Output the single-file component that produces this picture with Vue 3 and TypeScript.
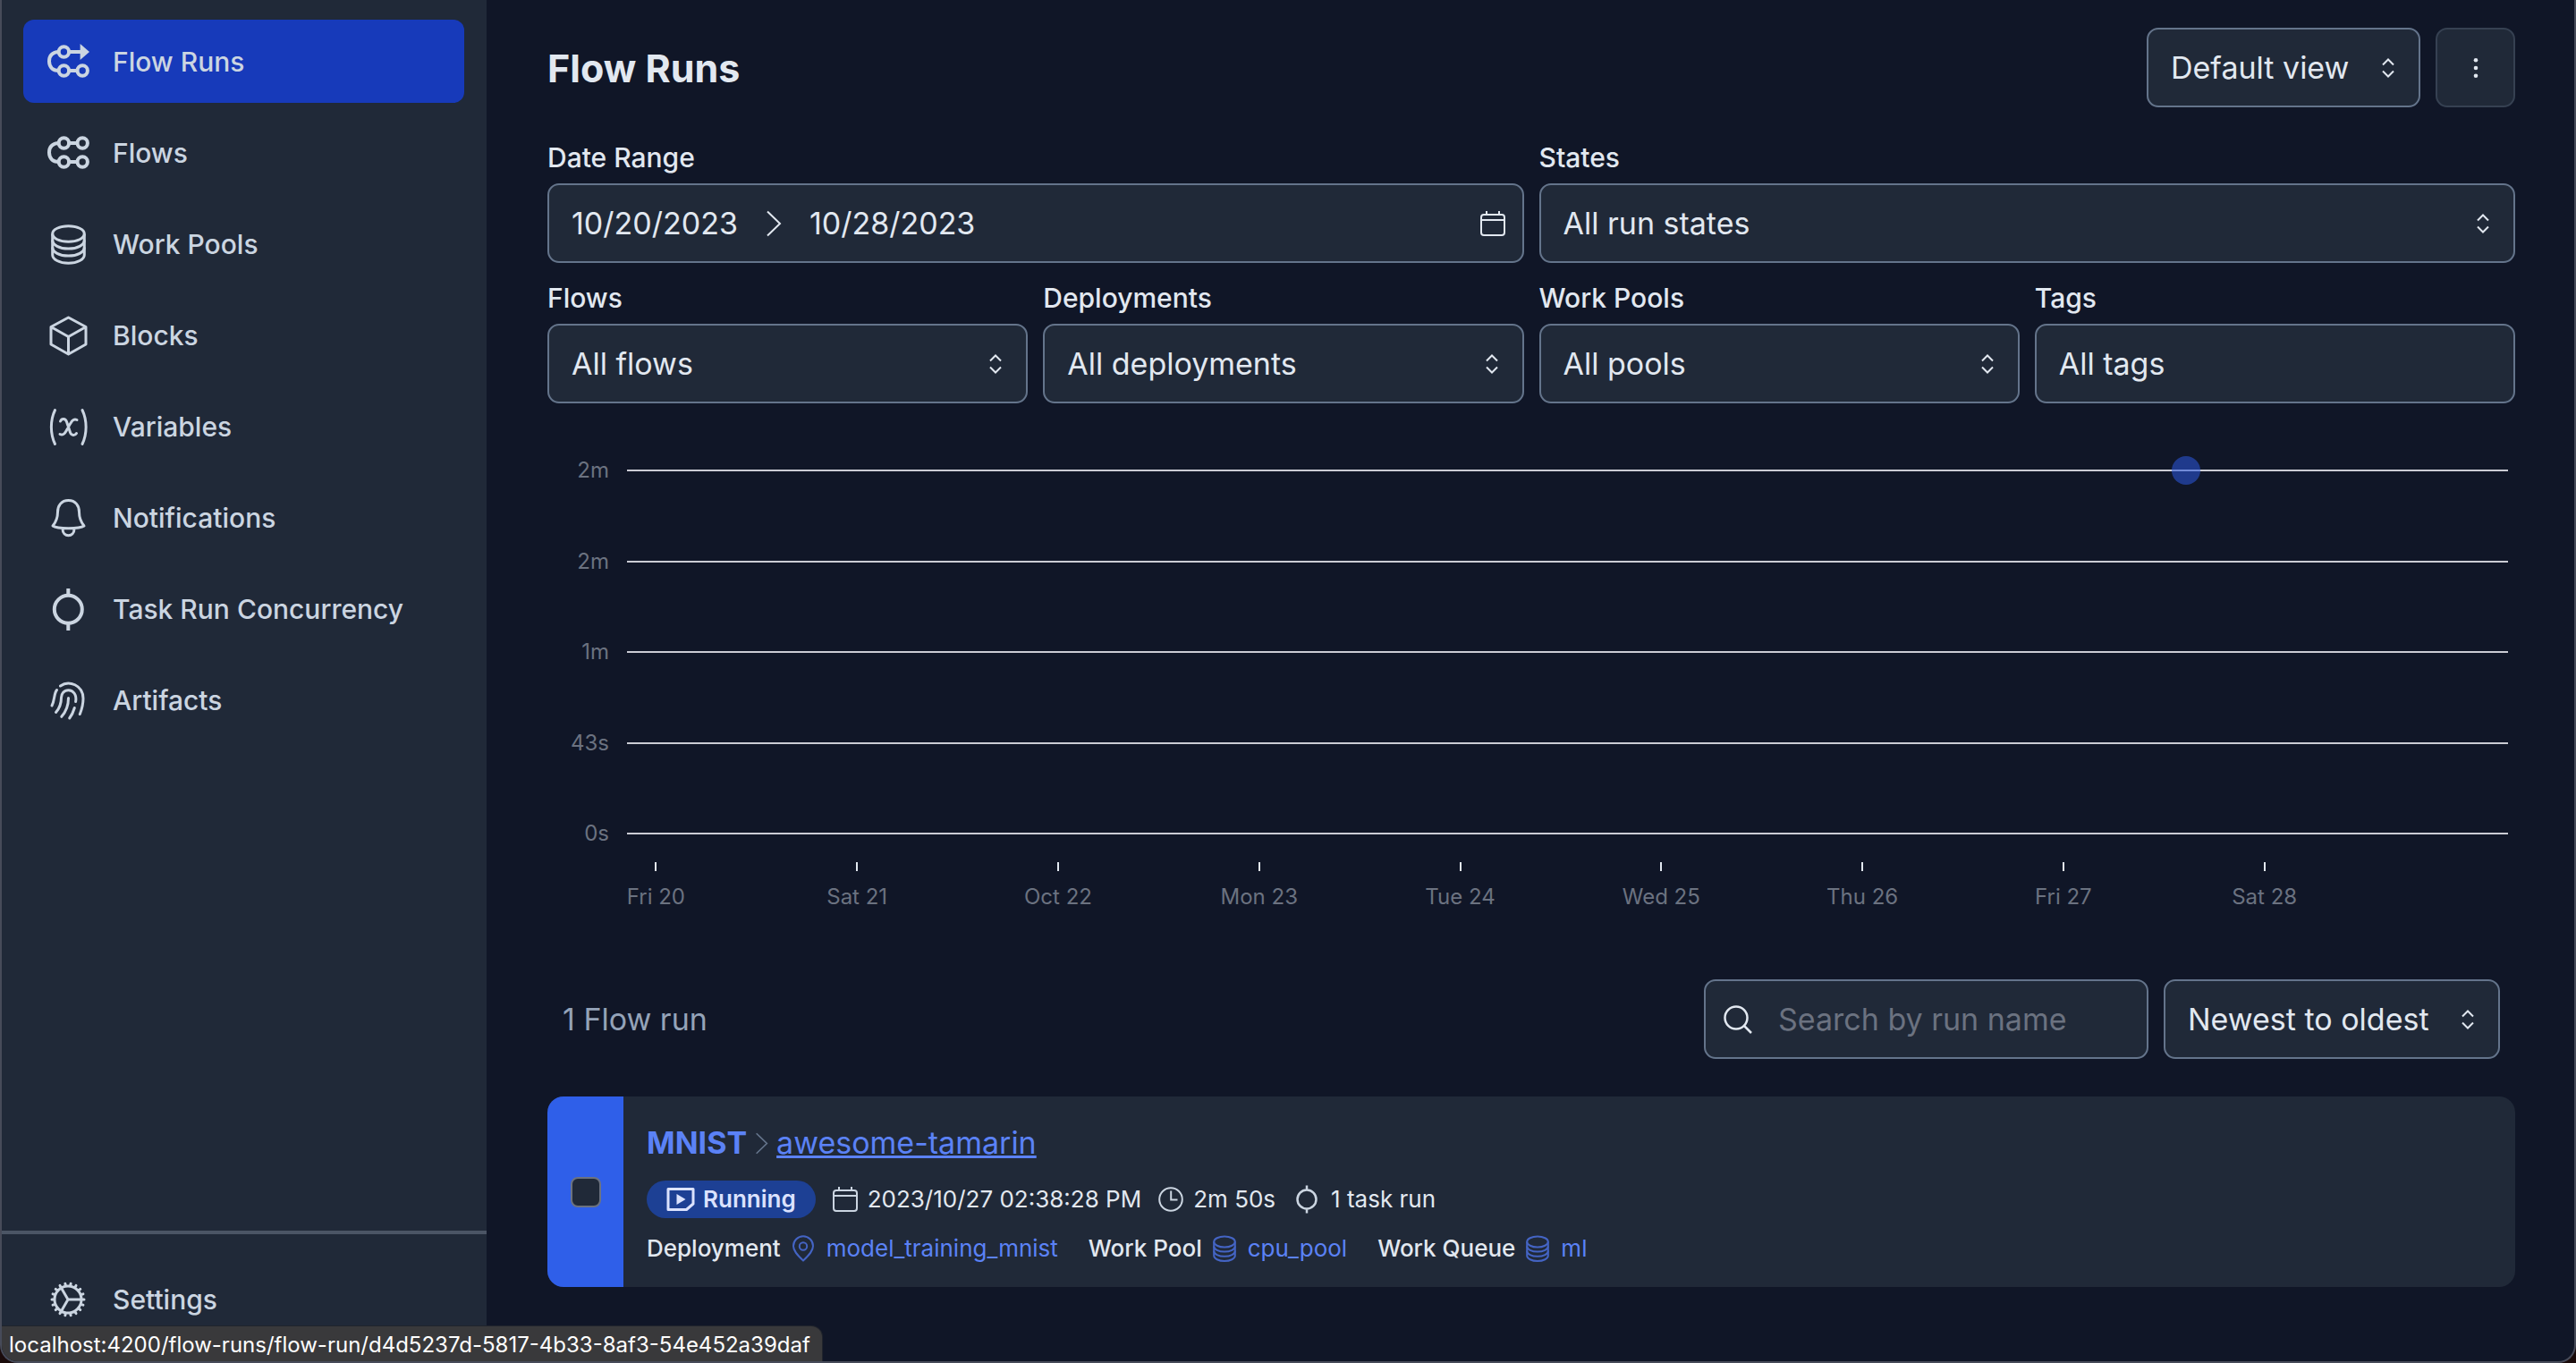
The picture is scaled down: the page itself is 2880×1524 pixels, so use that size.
<script setup lang="ts">
import { ref } from 'vue'

interface NavEntry {
  label: string
  icon: string
  active?: boolean
}

interface FilterEntry {
  id: string
  label: string
  value: string
}

const navigation: NavEntry[] = [
  { label: 'Flow Runs', icon: 'flow-runs', active: true },
  { label: 'Flows', icon: 'flows' },
  { label: 'Work Pools', icon: 'database' },
  { label: 'Blocks', icon: 'cube' },
  { label: 'Variables', icon: 'variable' },
  { label: 'Notifications', icon: 'bell' },
  { label: 'Task Run Concurrency', icon: 'task' },
  { label: 'Artifacts', icon: 'fingerprint' },
]

const filters: FilterEntry[] = [
  { id: 'flows-filter', label: 'Flows', value: 'All flows' },
  { id: 'deployments-filter', label: 'Deployments', value: 'All deployments' },
  { id: 'pools-filter', label: 'Work Pools', value: 'All pools' },
]

const durations: string[] = ['2m', '2m', '1m', '43s', '0s']
const days: string[] = ['Fri 20', 'Sat 21', 'Oct 22', 'Mon 23', 'Tue 24', 'Wed 25', 'Thu 26', 'Fri 27', 'Sat 28']

// Share of the plotted time span at which the run started
const runPosition = 82.88

const tags = ref('All tags')
const search = ref('')
const selected = ref(false)
</script>

<template>
  <svg class="sprite" aria-hidden="true">
    <symbol id="flow-runs" viewBox="0 0 48 48">
      <g fill="none" stroke="currentColor" stroke-width="4">
        <path d="M14 13C6 13 3 18 3 23.500S6 34 14 34M25 13H38M25 34H35" />
        <circle cx="19.400" cy="13" r="5.700" />
        <circle cx="19.400" cy="34" r="5.700" />
        <circle cx="40.200" cy="34" r="5.700" />
      </g>
      <path d="M37.600 4L48 13L37.600 22Z" fill="currentColor" />
    </symbol>
    <symbol id="flows" viewBox="0 0 48 48">
      <g fill="none" stroke="currentColor" stroke-width="4">
        <path d="M14 13C6 13 3 18 3 23.500S6 34 14 34M25 13H35M25 34H35" />
        <circle cx="19.400" cy="13" r="5.700" />
        <circle cx="40.200" cy="13" r="5.700" />
        <circle cx="19.400" cy="34" r="5.700" />
        <circle cx="40.200" cy="34" r="5.700" />
      </g>
    </symbol>
    <symbol id="database" viewBox="0 0 48 48">
      <g fill="none" stroke="currentColor" stroke-width="3">
        <ellipse cx="24.500" cy="12.500" rx="17.800" ry="8.800" />
        <path d="M6.700 12.500V36C6.700 41 14.500 45.300 24.500 45.300S42.300 41 42.300 36V12.500" />
        <path d="M6.700 19.500C6.700 25 14.500 29 24.500 29S42.300 25 42.300 19.500" />
        <path d="M6.700 27.500C6.700 33 14.500 37 24.500 37S42.300 33 42.300 27.500" />
      </g>
    </symbol>
    <symbol id="cube" viewBox="0 0 48 48">
      <path d="M24.500 4L44 14.500V34L24.500 45L5 34V14.500ZM5 14.500L24.500 25.500L44 14.500M24.500 25.500V45" fill="none" stroke="currentColor" stroke-width="3" stroke-linejoin="round" />
    </symbol>
    <symbol id="variable" viewBox="0 0 48 48">
      <g fill="none" stroke="currentColor" stroke-width="3" stroke-linecap="round">
        <path d="M9.500 5.500C4 17 4 32 9.500 43.500M40 5.500C45.500 17 45.500 32 40 43.500" />
        <path d="M15.500 18C17 14.500 21 14.500 22.500 18.500L26.500 30.500C28 34.500 32 34 33.500 31.500M34 16.500C30 14.500 28 18 24.500 24.500C21 31 19 34.500 15 32.500" />
      </g>
    </symbol>
    <symbol id="bell" viewBox="0 0 48 48">
      <path d="M24.500 4.500C16.500 4.500 12.500 10.500 12.500 17.500C12.500 26 9.500 30 7 33C12 36.500 37 36.500 42 33C39.500 30 36.500 26 36.500 17.500C36.500 10.500 32.500 4.500 24.500 4.500ZM18 36.500C18 46 31 46 31 36.500" fill="none" stroke="currentColor" stroke-width="3" stroke-linejoin="round" />
    </symbol>
    <symbol id="task" viewBox="0 0 48 48">
      <g fill="none" stroke="currentColor" stroke-width="4">
        <circle cx="24.300" cy="24.300" r="15.500" />
        <path d="M24.300 1V9M24.300 40V48" />
      </g>
    </symbol>
    <symbol id="fingerprint" viewBox="0 0 48 48">
      <g fill="none" stroke="currentColor" stroke-width="3" stroke-linecap="round">
        <path d="M15.500 8C25 1 41 7 41 22C41 28 39.500 34 37.300 39.500" />
        <path d="M11.500 12.500C8 17 9.500 23 6 30" />
        <path d="M32.600 25.500C34 18 30 12.700 24.500 12.700C19.500 12.700 16.500 16.500 16.500 21C16.500 27 14.500 33 10.500 37.500" />
        <path d="M24.500 21.500C24.500 30 21.500 37 16.800 42.300" />
        <path d="M31.300 32.500C30 37 28 41 25.700 44" />
      </g>
    </symbol>
    <symbol id="cog" viewBox="0 0 24 24">
      <path fill="none" stroke="currentColor" stroke-width="1.500" stroke-linecap="round" stroke-linejoin="round" d="M4.500 12a7.500 7.500 0 0 0 15 0m-15 0a7.500 7.500 0 1 1 15 0m-15 0H3m16.500 0H21m-1.500 0H12m-8.457 3.077l1.410-.513m14.095-5.130l1.410-.513M5.106 17.785l1.150-.964m11.490-9.642l1.149-.964M7.501 19.795l.750-1.300m7.500-12.990l.750-1.300m-6.063 16.658l.260-1.477m2.605-14.772l.260-1.477m0 17.726l-.260-1.477M10.698 4.614l-.260-1.477M16.500 19.794l-.750-1.299M7.500 4.205L12 12m6.894 5.785l-1.149-.964M6.256 7.178l-1.150-.964m15.352 8.864l-1.410-.513M4.954 9.435l-1.410-.514M12.002 12l-3.750 6.495" />
    </symbol>
    <symbol id="selector" viewBox="0 0 14 22">
      <path d="M1 7.500L7 1.500L13 7.500M1 14.500L7 20.500L13 14.500" fill="none" stroke="currentColor" stroke-width="2" />
    </symbol>
    <symbol id="calendar" viewBox="0 0 28 28">
      <path d="M1 7A3 3 0 0 1 4 4H24A3 3 0 0 1 27 7V24A3 3 0 0 1 24 27H4A3 3 0 0 1 1 24ZM1 10H27M7 0V4M21 0V4" fill="none" stroke="currentColor" stroke-width="2" />
    </symbol>
    <symbol id="clock" viewBox="0 0 28 28">
      <path d="M14 1.200A12.800 12.800 0 1 0 14 26.800A12.800 12.800 0 1 0 14 1.200M14.200 4.500V14.500H21.500" fill="none" stroke="currentColor" stroke-width="2" />
    </symbol>
    <symbol id="task-small" viewBox="0 0 32 32">
      <path d="M16 5.500A10.500 10.500 0 1 0 16 26.500A10.500 10.500 0 1 0 16 5.500M16 .5V5.500M16 26.500V31.500" fill="none" stroke="currentColor" stroke-width="2.500" />
    </symbol>
    <symbol id="pin" viewBox="0 0 30 30">
      <g fill="none" stroke="currentColor" stroke-width="2">
        <path d="M15 28.500C8 22 4 17.500 4 12.300A11 11 0 0 1 26 12.300C26 17.500 22 22 15 28.500Z" />
        <circle cx="15" cy="12.500" r="4.200" />
      </g>
    </symbol>
    <symbol id="database-small" viewBox="0 0 30 30">
      <g fill="none" stroke="currentColor" stroke-width="2">
        <ellipse cx="15" cy="7.500" rx="11.800" ry="6" />
        <path d="M3.200 7.500V23C3.200 26.300 8.500 29 15 29S26.800 26.300 26.800 23V7.500" />
        <path d="M3.200 12.500C3.200 16 8.500 18.600 15 18.600S26.800 16 26.800 12.500" />
        <path d="M3.200 17.700C3.200 21.200 8.500 23.800 15 23.800S26.800 21.200 26.800 17.700" />
      </g>
    </symbol>
    <symbol id="running" viewBox="0 0 32 28">
      <path d="M2 2.500H30V19L22.500 25.500H2Z" fill="none" stroke="currentColor" stroke-width="3" stroke-linejoin="round" />
      <path d="M11.500 8L21.500 14L11.500 20Z" fill="currentColor" />
    </symbol>
    <symbol id="search" viewBox="0 0 32 32">
      <path d="M14 1.500A12.500 12.500 0 1 0 14 26.500A12.500 12.500 0 1 0 14 1.500M23 23L31 31" fill="none" stroke="currentColor" stroke-width="2.500" />
    </symbol>
    <symbol id="chevron" viewBox="0 0 18 30">
      <path d="M2 1.500L16 15L2 28.500" fill="none" stroke="currentColor" stroke-width="2" />
    </symbol>
    <symbol id="kebab" viewBox="0 0 6 24">
      <g fill="currentColor">
        <circle cx="3" cy="3.300" r="2.300" />
        <circle cx="3" cy="12" r="2.300" />
        <circle cx="3" cy="20.700" r="2.300" />
      </g>
    </symbol>
  </svg>

  <div class="window">
    <aside class="sidebar">
      <nav class="nav" aria-label="Main">
        <a v-for="item in navigation" :key="item.label" href="#" class="nav-item" :class="{ 'nav-item--active': item.active }">
          <svg class="nav-icon"><use :href="`#${item.icon}`" /></svg>
          <span>{{ item.label }}</span>
        </a>
      </nav>
      <div class="sidebar-footer">
        <a href="#" class="nav-item">
          <svg class="nav-icon"><use href="#cog" /></svg>
          <span>Settings</span>
        </a>
      </div>
    </aside>

    <main class="main">
      <header class="header">
        <h1 class="title">Flow Runs</h1>
        <div class="actions">
          <div class="select-box">
            <select class="control select--fit" aria-label="Saved view">
              <option>Default view</option>
            </select>
            <svg class="selector"><use href="#selector" /></svg>
          </div>
          <button class="menu-button" type="button" aria-label="More actions">
            <svg class="kebab"><use href="#kebab" /></svg>
          </button>
        </div>
      </header>

      <section class="filters">
        <div class="field field--wide">
          <label for="date-range">Date Range</label>
          <button id="date-range" class="control date-range" type="button">
            <span>10/20/2023</span>
            <svg class="date-arrow"><use href="#chevron" /></svg>
            <span>10/28/2023</span>
            <svg class="date-icon"><use href="#calendar" /></svg>
          </button>
        </div>
        <div class="field field--wide">
          <label for="states">States</label>
          <div class="select-box">
            <select id="states" class="control">
              <option>All run states</option>
            </select>
            <svg class="selector"><use href="#selector" /></svg>
          </div>
        </div>
        <div v-for="filter in filters" :key="filter.id" class="field">
          <label :for="filter.id">{{ filter.label }}</label>
          <div class="select-box">
            <select :id="filter.id" class="control">
              <option>{{ filter.value }}</option>
            </select>
            <svg class="selector"><use href="#selector" /></svg>
          </div>
        </div>
        <div class="field">
          <label for="tags">Tags</label>
          <input id="tags" v-model="tags" class="control" type="text" />
        </div>
      </section>

      <section class="chart" aria-label="Run durations">
        <div class="plot">
          <div v-for="(duration, index) in durations" :key="index" class="plot-row">
            <span class="plot-label">{{ duration }}</span>
            <span class="plot-line">
              <span v-if="index === 0" class="plot-dot" :style="{ left: `${runPosition}%` }"></span>
            </span>
          </div>
        </div>
        <div class="axis">
          <span v-for="day in days" :key="day" class="axis-day">{{ day }}</span>
        </div>
      </section>

      <section class="toolbar">
        <span class="count">1 Flow run</span>
        <label class="control search">
          <svg class="search-icon"><use href="#search" /></svg>
          <input v-model="search" type="text" placeholder="Search by run name" aria-label="Search by run name" />
        </label>
        <div class="select-box">
          <select class="control select--fit" aria-label="Sort order">
            <option>Newest to oldest</option>
          </select>
          <svg class="selector"><use href="#selector" /></svg>
        </div>
      </section>

      <article class="run">
        <div class="run-state">
          <input v-model="selected" type="checkbox" class="checkbox" aria-label="Select awesome-tamarin" />
        </div>
        <div class="run-body">
          <div class="run-name">
            <a href="#" class="run-flow">MNIST</a>
            <svg class="run-arrow"><use href="#chevron" /></svg>
            <a href="#" class="run-link">awesome-tamarin</a>
          </div>
          <div class="run-meta">
            <span class="badge"><svg class="badge-icon"><use href="#running" /></svg>Running</span>
            <span class="meta"><svg class="meta-icon"><use href="#calendar" /></svg>2023/10/27 02:38:28 PM</span>
            <span class="meta"><svg class="meta-icon"><use href="#clock" /></svg>2m 50s</span>
            <span class="meta"><svg class="meta-icon meta-icon--large"><use href="#task-small" /></svg>1 task run</span>
          </div>
          <div class="run-relations">
            <span class="relation">
              <strong>Deployment</strong>
              <a href="#"><svg class="relation-icon"><use href="#pin" /></svg>model_training_mnist</a>
            </span>
            <span class="relation">
              <strong>Work Pool</strong>
              <a href="#"><svg class="relation-icon"><use href="#database-small" /></svg>cpu_pool</a>
            </span>
            <span class="relation">
              <strong>Work Queue</strong>
              <a href="#"><svg class="relation-icon"><use href="#database-small" /></svg>ml</a>
            </span>
          </div>
        </div>
      </article>
    </main>

    <div class="status">localhost:4200/flow-runs/flow-run/d4d5237d-5817-4b33-8af3-54e452a39daf</div>
  </div>
</template>

<style>
body {
  background: #1a0b0b;
}
</style>

<style scoped>
.sprite {
  position: absolute;
  width: 0;
  height: 0;
}

.window {
  position: relative;
  display: flex;
  box-sizing: border-box;
  min-height: 100vh;
  border: 2px solid #474b59;
  border-top: 0;
  border-radius: 0 0 20px 20px;
  overflow: hidden;
  background: #101627;
  color: #e2e8f0;
  font-family: Inter, "Liberation Sans", sans-serif;
  font-size: 34px;
  line-height: 44px;
}

a {
  color: inherit;
  text-decoration: none;
}

svg {
  flex: none;
  display: block;
}

/* Sidebar */
.sidebar {
  flex: none;
  display: flex;
  flex-direction: column;
  justify-content: space-between;
  width: 542px;
  background: #202938;
  color: #cbd5e1;
  font-size: 30px;
  font-weight: 500;
}

.nav {
  display: flex;
  flex-direction: column;
  gap: 9px;
  padding: 22px 25px 22px 24px;
}

.nav-item {
  display: flex;
  align-items: center;
  gap: 26px;
  box-sizing: border-box;
  height: 93px;
  padding: 0 26px;
  border-radius: 12px;
}

.nav-item--active {
  background: #173aba;
}

.nav-icon {
  width: 48px;
  height: 48px;
}

.sidebar-footer {
  padding: 26px 25px 23px 24px;
  border-top: 4px solid #4b5565;
}

/* Page */
.main {
  flex: 1;
  min-width: 0;
  padding: 31px 66px 0 68px;
}

.header {
  display: flex;
  align-items: center;
  justify-content: space-between;
  margin-bottom: 34px;
}

.title {
  margin: 0;
  font-size: 43px;
  font-weight: 700;
}

.actions {
  display: flex;
  gap: 17px;
}

.control {
  display: block;
  box-sizing: border-box;
  width: 100%;
  height: 89px;
  margin: 0;
  padding: 0 25px;
  border: 2px solid #64748b;
  border-radius: 13px;
  outline: 0;
  appearance: none;
  background: #202938;
  color: inherit;
  font: inherit;
  text-align: left;
}

.select-box {
  display: grid;
  align-items: center;
}

.select-box > * {
  grid-area: 1 / 1;
}

.selector {
  justify-self: end;
  width: 14px;
  height: 22px;
  margin-right: 29px;
  pointer-events: none;
}

.select--fit {
  padding-right: 77px;
}

.menu-button {
  display: flex;
  align-items: center;
  justify-content: center;
  width: 89px;
  height: 89px;
  padding: 0;
  border: 2px solid #364152;
  border-radius: 13px;
  background: #202938;
  color: inherit;
}

.kebab {
  width: 6px;
  height: 24px;
}

/* Filters */
.filters {
  display: grid;
  grid-template-columns: repeat(4, 1fr);
  gap: 17px;
}

.field {
  display: flex;
  flex-direction: column;
  gap: 7px;
}

.field--wide {
  grid-column: span 2;
}

.field > label {
  font-size: 30px;
  font-weight: 500;
}

.date-range {
  display: flex;
  align-items: center;
  gap: 31px;
  padding-right: 19px;
}

.date-arrow {
  width: 18px;
  height: 30px;
}

.date-icon {
  width: 28px;
  height: 28px;
  margin-left: auto;
}

/* Chart */
.chart {
  margin-top: 60px;
  color: #6b7280;
  font-size: 24px;
  line-height: 30px;
}

.plot {
  display: flex;
  flex-direction: column;
  justify-content: space-between;
  height: 436px;
  padding-right: 8px;
}

.plot-row {
  display: flex;
  align-items: center;
  gap: 20px;
}

.plot-label {
  width: 69px;
  text-align: right;
}

.plot-line {
  position: relative;
  flex: 1;
  height: 2px;
  background: #cbccd4;
}

.plot-dot {
  position: absolute;
  top: 50%;
  width: 32px;
  height: 32px;
  margin: -16px 0 0 -16px;
  border-radius: 50%;
  background: #2b57db;
  opacity: 0.56;
}

.axis {
  display: flex;
  margin-top: 17px;
  padding: 0 168px 0 9px;
}

.axis-day {
  flex: 1;
  text-align: center;
}

.axis-day::before {
  content: "";
  display: block;
  width: 2px;
  height: 10px;
  margin: 0 auto 14px;
  background: #e2e8f0;
}

/* Result list */
.toolbar {
  display: flex;
  align-items: center;
  gap: 17px;
  margin: 77px 17px 42px;
}

.count {
  margin-right: auto;
  color: #94a3b8;
}

.search {
  display: flex;
  align-items: center;
  gap: 29px;
  width: 497px;
  padding: 0 20px;
}

.search-icon {
  width: 32px;
  height: 32px;
}

.search > input {
  flex: 1;
  min-width: 0;
  padding: 0;
  border: 0;
  outline: 0;
  background: none;
  color: inherit;
  font: inherit;
}

.search > input::placeholder {
  color: #6b7280;
  opacity: 1;
}

.run {
  display: flex;
  border-radius: 18px;
  overflow: hidden;
  background: #202938;
}

.run-state {
  flex: none;
  display: flex;
  align-items: center;
  justify-content: center;
  width: 85px;
  background: #2f5fe9;
}

.checkbox {
  box-sizing: border-box;
  width: 34px;
  height: 34px;
  margin: 0;
  appearance: none;
  border: 2px solid #6b7280;
  border-radius: 8px;
  background: #202938;
}

.run-body {
  display: flex;
  flex-direction: column;
  gap: 18px;
  padding: 28px 26px 27px;
  font-size: 26px;
  line-height: 32px;
}

.run-name {
  display: flex;
  align-items: center;
  gap: 9px;
  color: #5b82f6;
  font-size: 34px;
  line-height: 48px;
}

.run-flow {
  font-weight: 700;
}

.run-arrow {
  width: 15px;
  height: 25px;
  color: #64748b;
}

.run-link {
  text-decoration: underline;
  text-decoration-thickness: 3px;
}

.run-meta {
  display: flex;
  align-items: center;
  gap: 19px;
}

.badge {
  display: flex;
  align-items: center;
  gap: 9px;
  height: 42px;
  padding: 0 22px;
  border-radius: 21px;
  background: #1d4094;
  color: #dbe2fe;
  font-weight: 600;
}

.badge-icon {
  width: 32px;
  height: 28px;
}

.meta {
  display: flex;
  align-items: center;
  gap: 11px;
}

.meta-icon {
  width: 28px;
  height: 28px;
  color: #cbd5e1;
}

.meta-icon--large {
  width: 32px;
  height: 32px;
}

.run-relations {
  display: flex;
  gap: 34px;
}

.relation {
  display: flex;
  gap: 10px;
}

.relation > strong {
  font-weight: 500;
}

.relation > a {
  display: flex;
  align-items: center;
  gap: 11px;
  color: #5b82f6;
}

.relation-icon {
  width: 30px;
  height: 30px;
  color: #4464c4;
}

/* Link preview drawn over the page */
.status {
  position: absolute;
  left: -2px;
  bottom: -2px;
  padding: 6px 13px 5px 10px;
  border-radius: 0 12px 0 12px;
  background: #39393b;
  box-shadow: 0 0 0 1px #20242c;
  color: #fff;
  font-size: 24px;
  line-height: 30px;
}
</style>
